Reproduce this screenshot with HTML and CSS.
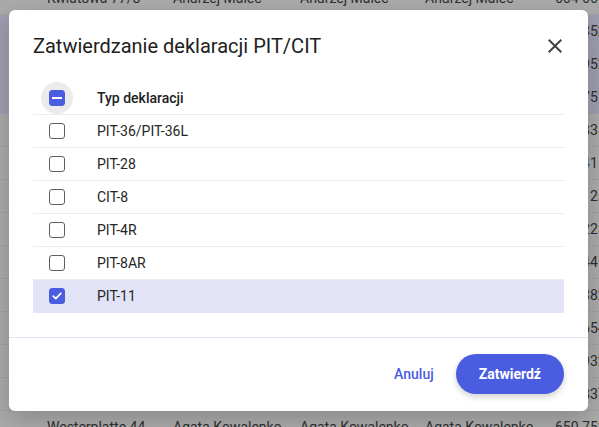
FILE: index.html
```html
<!DOCTYPE html>
<html lang="pl">
<head>
    <meta charset="UTF-8">
    <meta name="viewport" content="width=device-width, initial-scale=1.0">
    <title>Zatwierdzanie deklaracji</title>
    <link rel="stylesheet" href="styles.css">
</head>
<body>
    <div class="page">
        <div class="list">
            <div class="row"><span>Kwiatowa 77/8</span><span>Andrzej Malec</span><span>Andrzej Malec</span><span>Andrzej Malec</span><span>664 666 778</span></div>
            <div class="row marked"><span>Lipowa 12</span><span>Jan Nowak</span><span>Jan Nowak</span><span>Jan Nowak</span><span>600 352 118</span></div>
            <div class="row marked"><span>Polna 3</span><span>Anna Zając</span><span>Anna Zając</span><span>Anna Zając</span><span>611 952 310</span></div>
            <div class="row marked"><span>Leśna 8/2</span><span>Piotr Wójcik</span><span>Piotr Wójcik</span><span>Piotr Wójcik</span><span>602 751 440</span></div>
            <div class="row"><span>Ogrodowa 5</span><span>Ewa Lis</span><span>Ewa Lis</span><span>Ewa Lis</span><span>603 835 221</span></div>
            <div class="row"><span>Słoneczna 1</span><span>Marek Kot</span><span>Marek Kot</span><span>Marek Kot</span><span>612 41 220</span></div>
            <div class="row"><span>Krótka 9</span><span>Ola Kruk</span><span>Ola Kruk</span><span>Ola Kruk</span><span>605 125 904</span></div>
            <div class="row"><span>Długa 14</span><span>Adam Mazur</span><span>Adam Mazur</span><span>Adam Mazur</span><span>608 225 017</span></div>
            <div class="row"><span>Szkolna 6</span><span>Iga Sowa</span><span>Iga Sowa</span><span>Iga Sowa</span><span>601 441 662</span></div>
            <div class="row"><span>Wąska 21</span><span>Tomasz Bąk</span><span>Tomasz Bąk</span><span>Tomasz Bąk</span><span>609 382 175</span></div>
            <div class="row"><span>Parkowa 2</span><span>Zofia Rak</span><span>Zofia Rak</span><span>Zofia Rak</span><span>604 654 830</span></div>
            <div class="row"><span>Miodowa 17</span><span>Karol Gil</span><span>Karol Gil</span><span>Karol Gil</span><span>607 932 514</span></div>
            <div class="row"><span>Zielona 30</span><span>Maria Pawlak</span><span>Maria Pawlak</span><span>Maria Pawlak</span><span>606 837 209</span></div>
            <div class="row"><span>Westerplatte 44</span><span>Agata Kowalenko</span><span>Agata Kowalenko</span><span>Agata Kowalenko</span><span>650 752 301</span></div>
        </div>
    </div>

    <div class="dialog">
        <div class="dialog-head">
            <h2 class="dialog-title">Zatwierdzanie deklaracji PIT/CIT</h2>
            <button class="close-btn" type="button">
                <svg width="24" height="24" viewBox="0 0 24 24"><path d="M19 6.41 17.59 5 12 10.59 6.41 5 5 6.41 10.59 12 5 17.59 6.41 19 12 13.41 17.59 19 19 17.59 13.41 12z" fill="#424242"/></svg>
            </button>
        </div>

        <div class="dialog-body">
            <div class="tbl">
                <div class="tr th">
                    <div class="cb-cell"><span class="ripple"><span class="box checked"><span class="dash"></span></span></span></div>
                    <div class="name">Typ deklaracji</div>
                </div>
                <div class="tr">
                    <div class="cb-cell"><span class="ripple"><span class="box"></span></span></div>
                    <div class="name">PIT-36/PIT-36L</div>
                </div>
                <div class="tr">
                    <div class="cb-cell"><span class="ripple"><span class="box"></span></span></div>
                    <div class="name">PIT-28</div>
                </div>
                <div class="tr">
                    <div class="cb-cell"><span class="ripple"><span class="box"></span></span></div>
                    <div class="name">CIT-8</div>
                </div>
                <div class="tr">
                    <div class="cb-cell"><span class="ripple"><span class="box"></span></span></div>
                    <div class="name">PIT-4R</div>
                </div>
                <div class="tr">
                    <div class="cb-cell"><span class="ripple"><span class="box"></span></span></div>
                    <div class="name">PIT-8AR</div>
                </div>
                <div class="tr selected">
                    <div class="cb-cell"><span class="ripple"><span class="box checked">
                        <svg width="12" height="12" viewBox="0 0 12 12"><path d="M2.2 6.2 4.8 8.7 9.8 3.4" fill="none" stroke="#fff" stroke-width="1.7" stroke-linecap="round" stroke-linejoin="round"/></svg>
                    </span></span></div>
                    <div class="name">PIT-11</div>
                </div>
            </div>
        </div>

        <div class="dialog-foot">
            <button class="btn-text" type="button">Anuluj</button>
            <button class="btn-main" type="button">Zatwierdź</button>
        </div>
    </div>
</body>
</html>
```

FILE: styles.css
```css
*{
    margin: 0px;
    padding: 0px;
    box-sizing: border-box;
}
body{
    width: 599px;
    height: 427px;
    overflow: hidden;
    background: #aaaaaa;
    font-family: Roboto, "Noto Sans", sans-serif;
    position: relative;
}
.page{
    margin-top: -18px;
}
.list .row{
    display: grid;
    grid-template-columns: 126px 127px 125px 130px 1fr;
    padding-left: 47px;
    height: 33px;
    align-items: center;
    border-bottom: 1px solid #a1a1a1;
    font-size: 14px;
    color: #2e2e2e;
    white-space: nowrap;
}
.list .row.marked{
    background: #9e9eb0;
    border-bottom-color: #9e9eb0;
}

/* dialog */
.dialog{
    position: absolute;
    left: 9px;
    top: 10px;
    width: 579px;
    background: #fff;
    border-radius: 6px;
    box-shadow: 0 8px 24px rgba(0,0,0,0.2);
}
.dialog-head{
    display: flex;
    justify-content: space-between;
    align-items: center;
    padding: 24px 24px 0 24px;
}
.dialog-title{
    font-size: 20px;
    line-height: 24px;
    font-weight: 400;
    color: #212121;
}
.close-btn{
    border: none;
    background: none;
    width: 24px;
    height: 24px;
    margin-right: -3px;
    display: flex;
    cursor: pointer;
}
.dialog-body{
    padding: 24px 24px 24px 24px;
}
.tbl .tr{
    display: flex;
    align-items: center;
    height: 33px;
    border-bottom: 1px solid #ececf4;
    font-size: 14px;
    color: #262626;
}
.tbl .tr.selected{
    background: #e3e3f7;
    border-bottom-color: #e3e3f7;
}
.tbl .th .name{
    font-weight: 500;
    color: #212121;
}
.cb-cell{
    width: 64px;
    padding-left: 8px;
    display: flex;
}
.ripple{
    width: 32px;
    height: 32px;
    border-radius: 50%;
    display: flex;
    align-items: center;
    justify-content: center;
}
.th .ripple{
    background: #ebebeb;
}
.box{
    width: 16px;
    height: 16px;
    border: 1.5px solid #5f5f5f;
    border-radius: 3px;
    display: flex;
    align-items: center;
    justify-content: center;
}
.box.checked{
    background: #4a5ce0;
    border-color: #4a5ce0;
}
.box .dash{
    width: 10px;
    height: 2px;
    background: #fff;
}
.dialog-foot{
    display: flex;
    justify-content: flex-end;
    align-items: center;
    border-top: 1px solid #e4e2f4;
    padding: 16px 24px 17px 24px;
}
.btn-text{
    border: none;
    background: none;
    font-family: inherit;
    font-size: 14px;
    font-weight: 500;
    color: #4a5ce0;
    padding: 0 11px;
    margin-right: 11px;
    height: 40px;
    cursor: pointer;
}
.btn-main{
    border: none;
    background: #4a5ce0;
    color: #fff;
    font-family: inherit;
    font-size: 14px;
    font-weight: 700;
    height: 40px;
    padding: 0 23px;
    border-radius: 20px;
    box-shadow: 0 3px 6px rgba(0,0,0,0.18);
    cursor: pointer;
}
```
